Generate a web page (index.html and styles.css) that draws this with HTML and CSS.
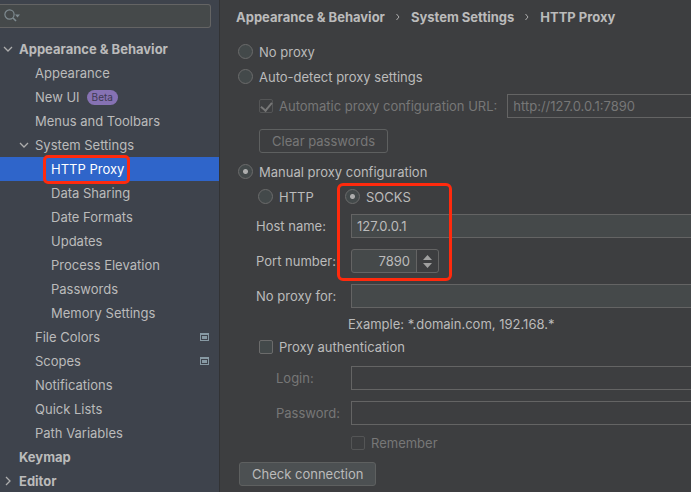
FILE: index.html
```html
<!DOCTYPE html>
<html lang="en">
<head>
<meta charset="utf-8">
<title>HTTP Proxy</title>
<link rel="stylesheet" href="styles.css">
</head>
<body>
<div class="app">
  <aside class="sidebar">
    <div class="search">
      <svg class="search-icon" width="18" height="14" viewBox="0 0 18 14" aria-hidden="true">
        <circle cx="5.5" cy="5.5" r="4.6" fill="none" stroke="#7f8b91" stroke-width="1.2"/>
        <path d="M9 9l3 3" stroke="#7f8b91" stroke-width="1.6"/>
        <path d="M11 5.500h5L13.500 8.500z" fill="#7f8b91"/>
      </svg>
      <input type="text" class="search-input" aria-label="Search settings">
    </div>
    <nav class="tree">
      <a href="#" class="node root"><svg class="arrow" width="10" height="10" viewBox="0 0 10 10"><path d="M1 3l4 4 4-4"/></svg>Appearance &amp; Behavior</a>
      <a href="#" class="node child">Appearance</a>
      <a href="#" class="node child">New UI<span class="beta">Beta</span></a>
      <a href="#" class="node child">Menus and Toolbars</a>
      <a href="#" class="node child"><svg class="arrow" width="10" height="10" viewBox="0 0 10 10"><path d="M1 3l4 4 4-4"/></svg>System Settings</a>
      <a href="#" class="node leaf selected"><span class="marked">HTTP Proxy<span class="mark mark-node"></span></span></a>
      <a href="#" class="node leaf">Data Sharing</a>
      <a href="#" class="node leaf">Date Formats</a>
      <a href="#" class="node leaf">Updates</a>
      <a href="#" class="node leaf">Process Elevation</a>
      <a href="#" class="node leaf">Passwords</a>
      <a href="#" class="node leaf">Memory Settings</a>
      <a href="#" class="node child">File Colors<svg class="project" width="9" height="8" viewBox="0 0 9 8"><path d="M0 0h9v8H0zM1 2v5h7V2z" fill-rule="evenodd"/><path d="M2 3h5v3H2z"/></svg></a>
      <a href="#" class="node child">Scopes<svg class="project" width="9" height="8" viewBox="0 0 9 8"><path d="M0 0h9v8H0zM1 2v5h7V2z" fill-rule="evenodd"/><path d="M2 3h5v3H2z"/></svg></a>
      <a href="#" class="node child">Notifications</a>
      <a href="#" class="node child">Quick Lists</a>
      <a href="#" class="node child">Path Variables</a>
      <a href="#" class="node root">Keymap</a>
      <a href="#" class="node root"><svg class="arrow" width="10" height="10" viewBox="0 0 10 10"><path d="M3 1l4 4-4 4"/></svg>Editor</a>
    </nav>
  </aside>
  <main class="content">
    <div class="crumbs">
      <span>Appearance &amp; Behavior</span>
      <svg width="4" height="8" viewBox="0 0 4 8"><path d="M.5 1L3 4 .5 7"/></svg>
      <span>System Settings</span>
      <svg width="4" height="8" viewBox="0 0 4 8"><path d="M.5 1L3 4 .5 7"/></svg>
      <span>HTTP Proxy</span>
    </div>
    <label class="option"><input type="radio" name="mode">No proxy</label>
    <label class="option"><input type="radio" name="mode">Auto-detect proxy settings</label>
    <div class="url-row">
      <label class="check disabled"><input type="checkbox" checked disabled>Automatic proxy configuration URL:</label>
      <input type="text" class="field" value="http://127.0.0.1:7890" aria-label="Automatic proxy configuration URL" disabled>
    </div>
    <button type="button" class="button clear" disabled>Clear passwords</button>
    <label class="option"><input type="radio" name="mode" checked>Manual proxy configuration</label>
    <div class="manual">
      <div class="protocols">
        <label class="option"><input type="radio" name="protocol">HTTP</label>
        <label class="option"><input type="radio" name="protocol" checked>SOCKS</label>
      </div>
      <div class="form">
        <label for="host">Host name:</label>
        <input type="text" class="field" id="host" value="127.0.0.1">
        <label for="port">Port number:</label>
        <div class="spinner">
          <input type="text" class="port" id="port" value="7890">
          <button type="button" class="steps" aria-label="Change port"><svg width="9" height="13" viewBox="0 0 9 13"><path d="M0 5L4.500 0 9 5zM0 8h9l-4.500 5z"/></svg></button>
        </div>
        <label for="bypass">No proxy for:</label>
        <input type="text" class="field" id="bypass">
      </div>
      <span class="mark mark-form"></span>
    </div>
    <div class="example">Example: *.domain.com, 192.168.*</div>
    <label class="check auth"><input type="checkbox">Proxy authentication</label>
    <div class="form credentials">
      <label for="login">Login:</label>
      <input type="text" class="field" id="login" disabled>
      <label for="password">Password:</label>
      <input type="password" class="field" id="password" disabled>
    </div>
    <label class="check disabled remember"><input type="checkbox" disabled>Remember</label>
    <button type="button" class="button test">Check connection</button>
  </main>
</div>
</body>
</html>
```
FILE: styles.css
```css
* { box-sizing: border-box; }
body {
  margin: 0;
  background: #3d3e40;
  color: #bbbbbb;
  font: 13px/16px Inter, "Liberation Sans", sans-serif;
}
input, button { font: inherit; color: inherit; margin: 0; }
.app { display: flex; height: 100vh; overflow: hidden; }

.sidebar {
  flex: 0 0 220px;
  background: #3e434c;
  border-right: 1px solid #323335;
  overflow: hidden;
}
.search {
  display: flex;
  align-items: center;
  height: 24px;
  margin: 4px 8px 9px 0;
  padding-left: 4px;
  background: #45494a;
  border: 1px solid #646464;
  border-left: 0;
  border-radius: 0 3px 3px 0;
}
.search-icon { flex: none; }
.search-input { flex: 1; min-width: 0; border: 0; background: none; outline: 0; }

.node {
  position: relative;
  display: flex;
  align-items: center;
  height: 24px;
  color: inherit;
  text-decoration: none;
}
.root { padding-left: 19px; font-weight: 700; }
.child { padding-left: 35px; }
.leaf { padding-left: 51px; }
.selected { background: #2f65ca; color: #ffffff; }
.arrow { width: 10px; margin-left: -16px; margin-right: 6px; fill: none; stroke: #adadad; stroke-width: 1.3; }
.beta {
  height: 15px;
  margin-left: 7px;
  padding: 0 5px;
  border-radius: 8px;
  background: #8672b3;
  color: #3e3a52;
  font-size: 10px;
  line-height: 15px;
}
.project { margin-left: auto; margin-right: 10px; fill: #8799a3; }
.marked { position: relative; }
.mark { position: absolute; border: 3px solid #ff2a0d; pointer-events: none; }
.mark-node { inset: -6px -6px -7px -8px; border-radius: 5px; z-index: 1; }
.mark-form { left: 99px; top: -1px; width: 115px; height: 98px; border-radius: 6px; }

.content { flex: 1; min-width: 0; padding-left: 18px; }
.crumbs {
  display: flex;
  align-items: center;
  gap: 11px;
  height: 34px;
  margin: 0 0 5px -2px;
  font-weight: 700;
}
.crumbs svg { fill: none; stroke: #adadad; }

.option { display: flex; align-items: center; gap: 6px; height: 25px; }
.check { display: flex; align-items: center; gap: 6px; height: 24px; }
.disabled { color: #777777; }
input[type="radio"], input[type="checkbox"] {
  flex: none;
  appearance: none;
  border: 1px solid #6b6b6b;
  background: #43494a;
}
input[type="radio"] { width: 15px; height: 15px; border-radius: 50%; }
input[type="radio"]:checked { background: radial-gradient(circle, #adadad 0 2px, #43494a 3px); }
input[type="checkbox"] { width: 14px; height: 14px; border-radius: 2px; }
input[type="checkbox"]:disabled { background: none; border-color: #545556; }
input[type="checkbox"]:checked { display: grid; place-items: center; }
input[type="checkbox"]:checked::after {
  content: "";
  width: 5px;
  height: 9px;
  margin-top: -2px;
  border: solid #777777;
  border-width: 0 2px 2px 0;
  transform: rotate(40deg);
}

.field {
  min-width: 0;
  height: 24px;
  padding: 0 5px;
  border: 1px solid #646464;
  border-right: 0;
  border-radius: 0;
  background: #45494a;
}
.field:disabled { background: none; color: #777777; }
.url-row { display: flex; gap: 10px; margin: 5px 0 0 21px; }
.url-row .field { flex: 1; }

.button {
  display: block;
  height: 24px;
  padding: 0 12px;
  border: 1px solid #5e6060;
  border-radius: 3px;
  background: #4c5052;
}
.button:disabled { background: none; color: #777777; }
.clear { margin: 11px 0 6px 21px; }

.manual { position: relative; }
.protocols { display: grid; grid-template-columns: 87px auto; justify-content: start; margin: 0 0 5px 20px; }
.form {
  display: grid;
  grid-template-columns: 95px 1fr;
  align-items: center;
  row-gap: 11px;
  padding-left: 18px;
}
.spinner {
  display: flex;
  width: 88px;
  height: 24px;
  border: 1px solid #646464;
  border-radius: 3px;
  background: #45494a;
}
.port { flex: 1; min-width: 0; padding: 0 6px; border: 0; background: none; text-align: right; }
.steps {
  display: grid;
  place-items: center;
  width: 22px;
  padding: 0;
  border: 0;
  border-left: 1px solid #646464;
  background: #3d3e40;
  border-radius: 0 3px 3px 0;
}
.steps svg { fill: #a0a0a0; }
.example { margin: 8px 0 3px 110px; }
.auth { margin: 0 0 7px 21px; }
.credentials { padding-left: 38px; grid-template-columns: 75px 1fr; color: #777777; }
.remember { margin: 6px 0 7px 113px; }
.test { margin-left: 1px; }
```
